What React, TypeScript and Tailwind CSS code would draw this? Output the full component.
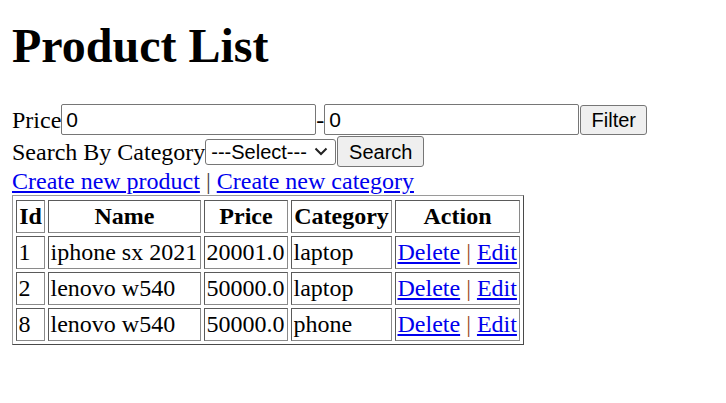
const products = [
  { id: 1, name: 'iphone sx 2021', price: '20001.0', category: 'laptop' },
  { id: 2, name: 'lenovo w540', price: '50000.0', category: 'laptop' },
  { id: 8, name: 'lenovo w540', price: '50000.0', category: 'phone' },
];

const cell =
  'h-[33px] p-[1.5px] border border-t-[#5a5a5a] border-l-[#5a5a5a] border-b-[#8a8a8a] border-r-[#8a8a8a] leading-[27px]';

const App = () => {
  return (
    <div className="min-h-[403px] bg-white pl-[12px] text-black font-['Liberation_Serif',serif] text-[24px]">
      <h1 className="pt-[18px] h-[73px] text-[48px] leading-[55px] font-bold">Product List</h1>

      <div className="mt-[31px] h-[31px] flex items-center">
        <span>Price</span>
        <input
          type="text"
          value="0"
          readOnly
          className="h-[31px] w-[255px] bg-white border border-[#767676] rounded-[2px] px-[4px] font-['Liberation_Sans',sans-serif] text-[21px] outline-none"
        />
        <span>-</span>
        <input
          type="text"
          value="0"
          readOnly
          className="h-[31px] w-[255px] bg-white border border-[#767676] rounded-[2px] px-[4px] font-['Liberation_Sans',sans-serif] text-[21px] outline-none"
        />
        <button className="ml-[1px] h-[30px] w-[67px] bg-[#efefef] border border-[#767676] rounded-[3px] font-['Liberation_Sans',sans-serif] text-[20px] leading-none">
          Filter
        </button>
      </div>

      <div className="mt-[1px] h-[31px] flex items-center">
        <span>Search By Category</span>
        <div className="h-[26px] w-[131px] bg-white border border-[#767676] rounded-[3px] flex items-center justify-between pl-[5px] pr-[7px] font-['Liberation_Sans',sans-serif] text-[20px] leading-none">
          <span>---Select---</span>
          <svg width="14" height="9" viewBox="0 0 14 9" fill="none">
            <path d="M1.5 1.5 L7 7 L12.5 1.5" stroke="#222" strokeWidth="2" />
          </svg>
        </div>
        <button className="ml-[1px] h-[31px] w-[87px] bg-[#efefef] border border-[#767676] rounded-[3px] font-['Liberation_Sans',sans-serif] text-[20px] leading-none">
          Search
        </button>
      </div>

      <div className="h-[28px] leading-[28px]">
        <a href="#" className="text-[#0000ee] underline">Create new product</a>{' '}
        <span className="text-[#444]">|</span>{' '}
        <a href="#" className="text-[#0000ee] underline">Create new category</a>
      </div>

      <table className="table-fixed w-[512px] pt-[1px] border-separate border-spacing-[3px] border border-t-[#9a9a9a] border-l-[#9a9a9a] border-b-[#4a4a4a] border-r-[#4a4a4a]">
        <thead>
          <tr>
            <th className={`${cell} w-[29px] text-center font-bold`}>Id</th>
            <th className={`${cell} w-[153px] text-center font-bold`}>Name</th>
            <th className={`${cell} w-[84px] text-center font-bold`}>Price</th>
            <th className={`${cell} w-[101px] text-center font-bold`}>Category</th>
            <th className={`${cell} w-[125px] text-center font-bold`}>Action</th>
          </tr>
        </thead>
        <tbody>
          {products.map((p) => (
            <tr key={p.id}>
              <td className={`${cell} text-left`}>{p.id}</td>
              <td className={`${cell} text-left whitespace-nowrap`}>{p.name}</td>
              <td className={`${cell} text-left`}>{p.price}</td>
              <td className={`${cell} text-left`}>{p.category}</td>
              <td className={`${cell} text-left whitespace-nowrap`}>
                <a href="#" className="text-[#0000ee] underline">Delete</a>{' '}
                <span className="text-[#9a4a2a]">|</span>{' '}
                <a href="#" className="text-[#0000ee] underline">Edit</a>
              </td>
            </tr>
          ))}
        </tbody>
      </table>
    </div>
  );
};

export default App;
